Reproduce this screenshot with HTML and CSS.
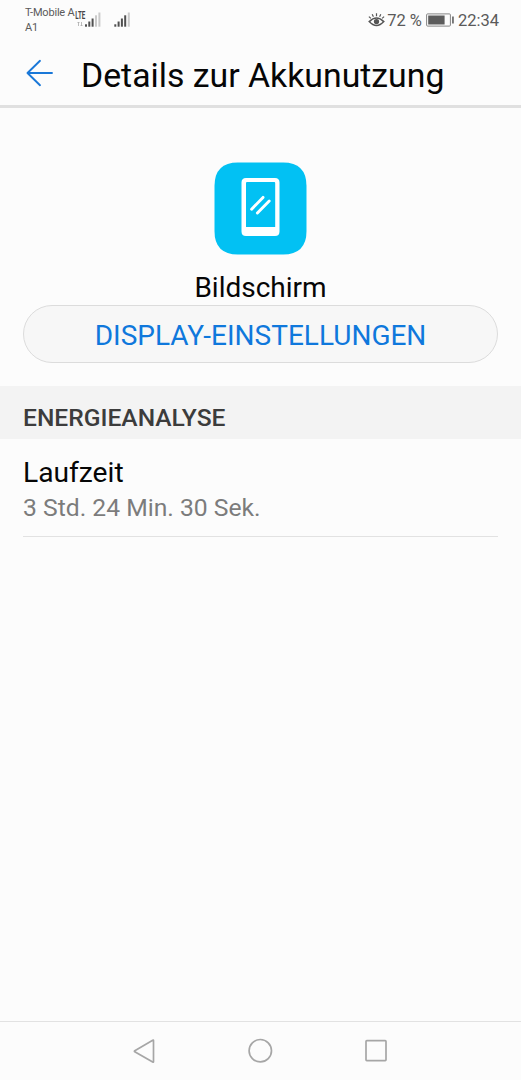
FILE: index.html
```html
<!DOCTYPE html>
<html lang="de">

<head>
  <meta charset="UTF-8">
  <meta name="viewport" content="width=device-width, initial-scale=1.0">
  <title>Details zur Akkunutzung</title>
  <link rel="stylesheet" href="styles.css">
</head>

<body>
  <div class="status-bar">
    <div class="carriers">
      <span>T-Mobile A</span>
      <span>A1</span>
    </div>
    <svg class="signals" width="56" height="20" viewBox="0 0 56 20">
      <text class="lte" x="0.3" y="9" textLength="10" lengthAdjust="spacingAndGlyphs">LTE</text>
      <path d="M3.5 16v-4M2.5 13l1-1 1 1M6.5 12v4M5.5 15l1 1 1-1" fill="none" stroke="#aaa" stroke-width="0.8" />
      <g fill="#505050">
        <rect x="10" y="14.3" width="2" height="2.4" />
        <rect x="13.3" y="11.5" width="2" height="5.2" />
        <rect x="16.6" y="8.5" width="2" height="8.2" />
        <rect x="39.3" y="14.3" width="2" height="2.4" />
        <rect x="42.6" y="11.5" width="2" height="5.2" />
        <rect x="45.9" y="8.5" width="2" height="8.2" />
        <rect x="49.2" y="5.3" width="2" height="11.4" />
      </g>
      <g fill="#cacaca">
        <rect x="20" y="5.3" width="2" height="11.4" />
        <rect x="23.4" y="2.5" width="2" height="14.2" />
        <rect x="52.8" y="2.5" width="2" height="14.2" />
      </g>
    </svg>
    <div class="status-right">
      <svg class="eye" width="17" height="16" viewBox="0 0 17 16" fill="none" stroke="#555" stroke-width="1.5">
        <path d="M1.2 9.6Q8.5 2.4 15.8 9.6Q8.5 17.6 1.2 9.6Z" />
        <circle cx="8.5" cy="9.6" r="1.9" fill="#555" />
        <path d="M0.9 4.6l2 1.8M4.2 2.3l1.2 2.4M8.5 1.2v3M12.8 2.3l-1.2 2.4M16.1 4.6l-2 1.8" stroke-width="1.2" />
      </svg>
      <span class="percent">72 %</span>
      <svg class="battery" width="29" height="14" viewBox="0 0 29 14">
        <rect x="0.6" y="0.9" width="23.8" height="12.2" rx="1" fill="none" stroke="#858585" />
        <rect x="2.2" y="2.5" width="16.4" height="9" fill="#5c5c5c" />
        <rect x="26.2" y="3.5" width="1.5" height="7" fill="#555" />
      </svg>
      <span class="clock">22:34</span>
    </div>
  </div>

  <header class="header">
    <svg class="back" width="28" height="28" viewBox="0 0 28 28" fill="none" stroke="#1a78d8" stroke-width="1.9" stroke-linecap="round" stroke-linejoin="round">
      <path d="M26 14H1.5M14 1.8L1.5 14L14 26.2" />
    </svg>
    <h1>Details zur Akkunutzung</h1>
  </header>

  <main class="content">
    <section class="app">
      <svg class="app-icon" width="93" height="93" viewBox="0 0 93 93">
        <path d="M24 0.5H69Q92.5 0.5 92.5 24V69Q92.5 92.5 69 92.5H24Q0.5 92.5 0.5 69V24Q0.5 0.5 24 0.5Z" fill="#02c1f3" />
        <path fill="#fff" fill-rule="evenodd" d="M32 16H61Q65.5 16 65.5 20.5V69.5Q65.5 74 61 74H32Q27.5 74 27.5 69.5V20.5Q27.5 16 32 16ZM33 20Q32 20 32 21V65H61.2V21Q61.2 20 60.2 20Z" />
        <path d="M37.6 47.2L49 35.4M43.4 51L55.2 39" stroke="#fff" stroke-width="2.9" stroke-linecap="round" />
      </svg>
      <h2>Bildschirm</h2>
      <button class="settings-btn">DISPLAY-EINSTELLUNGEN</button>
    </section>

    <h3 class="section-title">ENERGIEANALYSE</h3>
    <div class="row">
      <div class="row-title">Laufzeit</div>
      <div class="row-value">3 Std. 24 Min. 30 Sek.</div>
    </div>
  </main>

  <nav class="nav-bar">
    <svg width="28" height="28" viewBox="0 0 28 28">
      <path d="M23.5 3.5V24.7Q23.5 25.5 22.700 25L4.800 14.800Q4 14.200 4.800 13.700L22.700 3.200Q23.500 2.800 23.500 3.500Z" />
    </svg>
    <svg width="28" height="28" viewBox="0 0 28 28">
      <circle cx="14.3" cy="13.7" r="11.2" />
    </svg>
    <svg width="28" height="28" viewBox="0 0 28 28">
      <rect x="4" y="3.6" width="20" height="20" rx="0.8" />
    </svg>
  </nav>
</body>

</html>
```
FILE: styles.css
```css
:root {
  --bg: #fcfcfc;
  --accent: #0f78dc;
  --status: #5a5a5a;
}

* {
  box-sizing: border-box;
  margin: 0;
  padding: 0;
}

body {
  display: flex;
  flex-direction: column;
  height: 100vh;
  background-color: var(--bg);
  color: #060606;
  font-family: Roboto, sans-serif;
  overflow: hidden;
}

.status-bar {
  display: flex;
  height: 40px;
  padding: 0 22px 0 25px;
  color: var(--status);
}

.carriers {
  display: flex;
  flex-direction: column;
  width: 50px;
  padding-top: 5px;
  font-size: 11px;
  letter-spacing: -0.2px;
  line-height: 15px;
  white-space: nowrap;
}

.signals {
  margin-top: 10px;
}

.lte {
  font-size: 10px;
  font-weight: 700;
  fill: #444;
}

.status-right {
  display: flex;
  align-items: center;
  height: 40px;
  margin-left: auto;
  font-size: 16.5px;
}

.percent {
  margin: 0 4px 0 2px;
}

.clock {
  margin-left: 3px;
}

.header {
  display: flex;
  align-items: center;
  height: 68px;
  padding: 1px 26px 0 26px;
  border-bottom: 3px solid #e0e0e0;
}

.header h1 {
  margin-left: 27px;
  padding-top: 4px;
  font-size: 33.8px;
  font-weight: 400;
  white-space: nowrap;
}

.content {
  flex: 1;
}

.app {
  display: flex;
  flex-direction: column;
  align-items: center;
  padding: 54px 23px 23px;
}

.app h2 {
  height: 50px;
  padding-top: 16px;
  font-size: 28px;
  font-weight: 400;
  line-height: 34px;
}

.settings-btn {
  width: 100%;
  height: 58px;
  padding-top: 2px;
  border: 1px solid #dcdcdc;
  border-radius: 29px;
  background-color: #f7f7f7;
  color: var(--accent);
  font-family: inherit;
  font-size: 28px;
}

.section-title {
  height: 53px;
  padding: 10px 23px 0;
  background-color: #f3f3f3;
  color: #3c3c3c;
  font-size: 24.6px;
  font-weight: 500;
  line-height: 44px;
}

.row {
  height: 98px;
  margin: 0 23px;
  padding-top: 17px;
  border-bottom: 1px solid #e2e2e2;
}

.row-title {
  font-size: 28.2px;
  line-height: 34px;
}

.row-value {
  color: #7c7c7c;
  font-size: 24.7px;
  line-height: 36px;
}

.nav-bar {
  display: flex;
  justify-content: center;
  align-items: center;
  gap: 88px;
  height: 59px;
  padding-right: 1px;
  border-top: 1px solid #e2e2e2;
}

.nav-bar svg {
  fill: none;
  stroke: #a6a6a6;
  stroke-width: 1.7;
}
```
